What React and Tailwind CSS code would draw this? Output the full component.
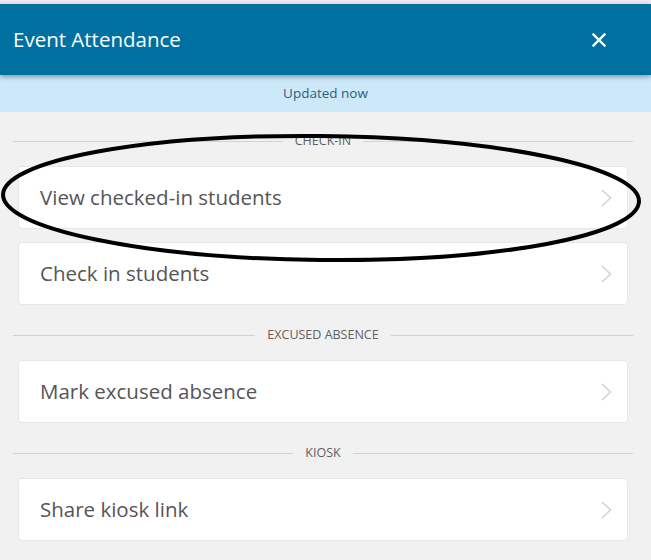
import React from 'react';

const sections = [
  { label: 'CHECK-IN', items: ['View checked-in students', 'Check in students'] },
  { label: 'EXCUSED ABSENCE', items: ['Mark excused absence'] },
  { label: 'KIOSK', items: ['Share kiosk link'] },
];

function Chevron() {
  return (
    <svg width="11" height="18" viewBox="0 0 11 18" fill="none" className="shrink-0">
      <path d="M1 1l8.5 8L1 17" stroke="#cfcfcf" strokeWidth="1.3" />
    </svg>
  );
}

function SectionLabel({ label }) {
  return (
    <div className="flex h-[12px] items-center gap-3 pl-[13px] pr-[18px]">
      <div className="h-px flex-1 bg-[#d2d2d2]" />
      <span className="text-[12.5px] leading-none text-[#5f5f5f]">{label}</span>
      <div className="h-px flex-1 bg-[#d2d2d2]" />
    </div>
  );
}

export default function App() {
  return (
    <div
      className="relative h-[560px] w-[651px] overflow-hidden bg-[#f1f1f1]"
      style={{ fontFamily: '"Open Sans", Lato, sans-serif' }}
    >
      <div className="h-[4px] bg-[#f1e6f1]" />
      <div className="relative z-10 flex h-[71px] items-center justify-between bg-[#0070a1] pl-[13px] pr-[45px] shadow-[0_2px_5px_rgba(0,0,0,0.35)]">
        <h1 className="text-[20.5px] font-normal text-white">Event Attendance</h1>
        <svg width="14" height="14" viewBox="0 0 14 14">
          <path d="M1.5 1.5l11 11M12.5 1.5l-11 11" stroke="white" strokeWidth="2.4" strokeLinecap="square" />
        </svg>
      </div>
      <div className="flex h-[37px] items-center justify-center bg-[#cde9f9] text-[13.5px] text-[#2b5f7c]">
        Updated now
      </div>

      <div className="pt-[23px]">
        {sections.map((s) => (
          <div key={s.label} className="mb-[24px]">
            <SectionLabel label={s.label} />
            <div className="mt-[19px] flex flex-col gap-[13px] pl-[18px] pr-[23px]">
              {s.items.map((item) => (
                <div
                  key={item}
                  className="flex h-[63px] items-center justify-between rounded-[4px] border border-[#e7e7e7] bg-white pl-[21px] pr-[15px]"
                >
                  <span className="text-[20.5px] text-[#555555]">{item}</span>
                  <Chevron />
                </div>
              ))}
            </div>
          </div>
        ))}
      </div>

      <svg className="pointer-events-none absolute left-0 top-0" width="651" height="560">
        <ellipse cx="321" cy="198" rx="318" ry="62" fill="none" stroke="black" strokeWidth="4" transform="rotate(0.6 321 198)" />
      </svg>
    </div>
  );
}
